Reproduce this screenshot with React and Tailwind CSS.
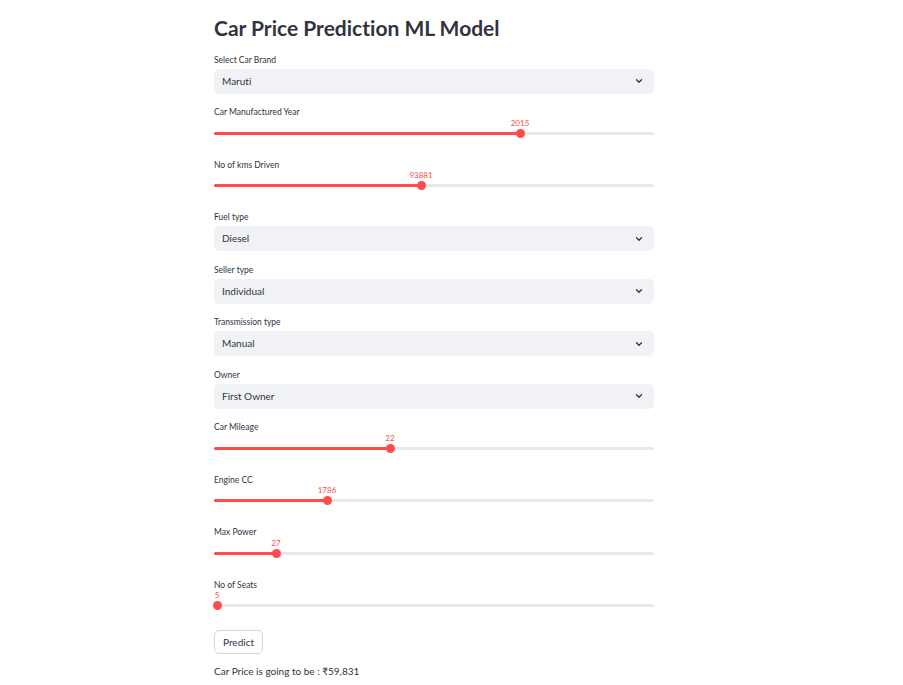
import { ChevronDown } from "lucide-react";

const font = { fontFamily: "Lato, 'Liberation Sans', sans-serif" };

const fields = [
  { kind: "select", label: "Select Car Brand", value: "Maruti" },
  { kind: "slider", label: "Car Manufactured Year", value: "2015", x: 306 },
  { kind: "slider", label: "No of kms Driven", value: "93881", x: 207 },
  { kind: "select", label: "Fuel type", value: "Diesel" },
  { kind: "select", label: "Seller type", value: "Individual" },
  { kind: "select", label: "Transmission type", value: "Manual" },
  { kind: "select", label: "Owner", value: "First Owner" },
  { kind: "slider", label: "Car Mileage", value: "22", x: 176 },
  { kind: "slider", label: "Engine CC", value: "1786", x: 113 },
  { kind: "slider", label: "Max Power", value: "27", x: 62 },
  { kind: "slider", label: "No of Seats", value: "5", x: 3 },
];

const Label = ({ children }) => (
  <div className="h-[12px] pt-[1px] text-[8.5px] leading-[12px] text-[#31333f]">{children}</div>
);

const SelectField = ({ label, value }) => (
  <div className="h-[52.5px] flex flex-col gap-[4px]">
    <Label>{label}</Label>
    <div className="h-[25px] rounded-[5px] bg-[#f0f2f6] flex items-center justify-between pl-[8px] pr-[10px]">
      <span className="text-[10px] text-[#31333f]">{value}</span>
      <ChevronDown size={10} strokeWidth={3} className="text-[#31333f]" />
    </div>
  </div>
);

const SliderField = ({ label, value, x }) => (
  <div className="h-[52.5px] flex flex-col">
    <Label>{label}</Label>
    <div className="flex h-[11px] items-center pt-[1px]">
      <div className="shrink-0" style={{ width: x }} />
      <span className="-translate-x-1/2 text-[8px] leading-[11px] text-[#ff4b4b]">{value}</span>
    </div>
    <div className="flex h-[10px] items-center">
      <div className="h-[3px] shrink-0 rounded-l-full bg-[#ff4b4b]" style={{ width: x }} />
      <div className="z-10 -mx-[4.5px] h-[9px] w-[9px] shrink-0 rounded-full bg-[#ff4b4b]" />
      <div className="h-[3px] flex-1 rounded-r-full bg-[#e6e9ef]" />
    </div>
  </div>
);

export default function App() {
  return (
    <div className="min-h-screen bg-white [font-variant-ligatures:none]" style={font}>
      <div className="ml-[214px] w-[440px] flex flex-col">
        <div className="h-[52.5px] pt-[14px]">
          <h1 className="text-[21px] leading-[28px] font-bold text-[#31333f]">
            Car Price Prediction ML Model
          </h1>
        </div>

        {fields.map((f) =>
          f.kind === "select" ? (
            <SelectField key={f.label} {...f} />
          ) : (
            <SliderField key={f.label} {...f} />
          )
        )}

        <div className="flex">
          <button className="h-[24px] px-[8px] rounded-[5px] border border-[#d6d6d9] bg-white text-[10px] text-[#31333f]">
            Predict
          </button>
        </div>

        <p className="mt-[10px] text-[10px] leading-[14px] text-[#31333f]">
          Car Price is going to be : ₹59,831
        </p>
      </div>
    </div>
  );
}
